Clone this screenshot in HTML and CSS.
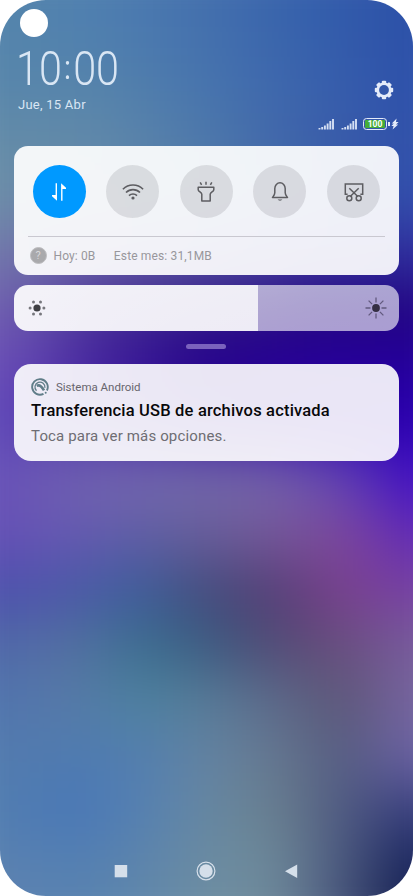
FILE: index.html
```
<!DOCTYPE html>
<html lang="es">
<head>
<meta charset="utf-8">
<title>Panel de notificaciones</title>
<link rel="stylesheet" href="styles.css">
</head>
<body>
<main class="phone">
  <div class="wallpaper"></div>
  <div class="camera"></div>
  <header class="header">
    <div class="clock-block">
      <div class="clock">10<span class="colon">:</span>00</div>
      <div class="date">Jue, 15 Abr</div>
    </div>
    <div class="status">
      <svg class="gear" width="20" height="20" viewBox="0 0 20 20"><g fill="#e4ebf9"><circle cx="10" cy="10" r="7.600"/><rect x="7.800" y="0.8" width="4.400" height="18.400" rx="1"/><rect x="7.800" y="0.8" width="4.400" height="18.400" rx="1" transform="rotate(45 10 10)"/><rect x="7.800" y="0.8" width="4.400" height="18.400" rx="1" transform="rotate(90 10 10)"/><rect x="7.800" y="0.8" width="4.400" height="18.400" rx="1" transform="rotate(135 10 10)"/></g><circle cx="10" cy="10" r="4.900" fill="#3458aa"/></svg>
      <div class="indicators">
        <svg class="signal" width="17" height="12" viewBox="0 0 17 12"><path d="M1.500 10v1.500M4.200 9v2.500M6.900 7.500v4M9.600 5.500v6M12.300 3v8.500M15 1v10.500" stroke="#d5e0f4" stroke-width="1.900"/></svg>
        <svg class="signal" width="17" height="12" viewBox="0 0 17 12"><path d="M1.500 10v1.500M4.200 9v2.500M6.900 7.500v4M9.600 5.500v6M12.300 3v8.500M15 1v10.500" stroke="#d5e0f4" stroke-width="1.900"/></svg>
        <div class="battery"><span class="level">100</span></div>
        <svg class="bolt" width="8" height="12" viewBox="0 0 8 12"><path d="M5.600.6.8 5.500h2L.4 8h2.200L1.600 11.500l5.600-5H5l2.600-2.500H5z" fill="#e4ebf9"/></svg>
      </div>
    </div>
  </header>

  <section class="card controls">
    <div class="toggles">
      <div class="toggle on"><svg width="28" height="28" viewBox="0 0 28 28" fill="#fff"><path d="M10.600 5.300H12v17.400L7 18.300v-1.200h3.600zM16.100 22.700h1.400V10.900H21V9.700l-4.900-4.400z"/></svg></div>
      <div class="toggle"><svg width="28" height="28" viewBox="0 0 28 28" fill="none" stroke="#5d5d61" stroke-width="1.600"><path d="M3.900 11.200a14.300 14.300 0 0 1 20.200 0M7 14.500a9.900 9.900 0 0 1 14 0M10 17.600a5.700 5.700 0 0 1 8 0"/><circle cx="14" cy="20" r="1.600" fill="#5d5d61" stroke="none"/></svg></div>
      <div class="toggle"><svg width="28" height="28" viewBox="0 0 28 28" fill="none" stroke="#5d5d61" stroke-width="1.500" stroke-linejoin="round"><path d="M6.200 9.300h15.600v2.400c0 2-3.600 2.500-3.600 4.600v6.600H9.800v-6.600c0-2.100-3.600-2.600-3.600-4.600zM14 3.800v3M8.200 4.300l1.400 2.500M19.800 4.300l-1.400 2.500"/></svg></div>
      <div class="toggle"><svg width="28" height="28" viewBox="0 0 28 28" fill="none" stroke="#5d5d61" stroke-width="1.500" stroke-linejoin="round"><path d="M8.800 10.500a5.200 5.800 0 0 1 10.400 0v4.200c0 2 1.200 3.200 2.300 4.800h-15c1.100-1.600 2.300-2.800 2.300-4.800z"/><path d="M11.700 21.500h4.600c-.8 1.500-3.800 1.500-4.600 0z" fill="#5d5d61" stroke="none"/></svg></div>
      <div class="toggle"><svg width="28" height="28" viewBox="0 0 28 28" fill="none" stroke="#5d5d61" stroke-width="1.500"><path d="M7.600 16.200H5.300V6h17.400v10.200h-2.300M9.300 10.200l8.500 8.300M18.700 10.200l-8.500 8.300"/><circle cx="9.300" cy="20.200" r="2.500"/><circle cx="18.700" cy="20.200" r="2.500"/></svg></div>
    </div>
    <div class="usage">
      <span class="help">?</span>
      <span class="today">Hoy: 0B</span>
      <span class="month">Este mes: 31,1MB</span>
    </div>
  </section>

  <section class="brightness">
    <svg width="18" height="18" viewBox="0 0 18 18"><circle cx="9" cy="9" r="3.600" fill="#3f3f43"/><g fill="#77777d"><circle cx="2.100" cy="9" r="1.500"/><circle cx="15.900" cy="9" r="1.500"/><circle cx="5.500" cy="3" r="1.500"/><circle cx="12.500" cy="3" r="1.500"/><circle cx="5.500" cy="15" r="1.500"/><circle cx="12.500" cy="15" r="1.500"/></g></svg>
    <svg width="22" height="22" viewBox="0 0 22 22"><circle cx="11" cy="11" r="3.900" fill="#352f43"/><path d="M11 .5v5M11 16.500v5M.5 11h5M16.500 11h5M3.600 3.600l3.500 3.500M14.900 14.900l3.500 3.500M3.600 18.400l3.500-3.500M14.900 7.100l3.500-3.500" stroke="#625a7e" stroke-width="1.300"/></svg>
  </section>
  <div class="handle"></div>

  <article class="card notification">
    <div class="source">
      <svg width="18" height="18" viewBox="0 0 18 18" fill="none" stroke="#607d88"><path d="M15.900 12.500A7.800 7.800 0 1 0 12.500 15.900" stroke-width="1.900"/><path d="M5.500 12.700A5 5 0 1 1 13.900 9.800" stroke-width="1.300"/><path d="M5.800 7.800c2.800-1.400 4.800.4 7.200 4.600" stroke-width="2.600"/><circle cx="14.700" cy="14.700" r="1" fill="#607d88" stroke="none"/></svg>
      <span class="app">Sistema Android</span>
    </div>
    <h1 class="title">Transferencia USB de archivos activada</h1>
    <p class="text">Toca para ver más opciones.</p>
  </article>

  <nav class="nav">
    <svg width="20" height="20" viewBox="0 0 20 20"><rect x="3.700" y="4" width="12.500" height="12.300" fill="#d5dfea"/></svg>
    <svg width="20" height="20" viewBox="0 0 20 20"><circle cx="10" cy="10" r="8.900" fill="none" stroke="#d5dfea" stroke-width="1.200"/><circle cx="10" cy="10" r="6.700" fill="#d5dfea"/></svg>
    <svg width="20" height="20" viewBox="0 0 20 20"><path d="M16.200 3.500v13.500L4 10.200z" fill="#d5dfea"/></svg>
  </nav>
</main>
</body>
</html>
```
FILE: styles.css
```
* { box-sizing: border-box; }
body { margin: 0; background: #fff; font-family: Roboto, "Liberation Sans", sans-serif; }
.phone {
  position: relative;
  isolation: isolate;
  width: 413px;
  height: 896px;
  border-radius: 46px;
  overflow: hidden;
  display: flex;
  flex-direction: column;
  padding: 0 14px 0 13.500px;
}
/* Horizontal colour bands, softened into one continuous field. */
.wallpaper {
  position: absolute;
  z-index: -1;
  inset: -56px;
  filter: blur(27px);
  background-color: #506090;
  background-repeat: no-repeat;
  background-size: 100% 57px;
  background-image:
    linear-gradient(90deg, #5585ab 56px, #4f7fb0 156px, #4470ad 262px, #3560ac 366px, #2c50a8 469px),
    linear-gradient(90deg, #5585ab 56px, #4f7fb0 156px, #4470ad 262px, #3560ac 366px, #2c50a8 469px),
    linear-gradient(90deg, #5886ab 56px, #5583ab 156px, #4774ae 262px, #3a62ac 366px, #2d50aa 469px),
    linear-gradient(90deg, #648ca8 56px, #6089aa 156px, #4d78aa 262px, #3c60aa 366px, #3050aa 469px),
    linear-gradient(90deg, #6c8ea8 56px, #6685a8 156px, #547caa 262px, #4064aa 366px, #304cac 469px),
    linear-gradient(90deg, #7278aa 56px, #6a60a6 156px, #5550a0 262px, #4038a0 366px, #2c2c9c 469px),
    linear-gradient(90deg, #7060b0 56px, #4a3498 156px, #341c88 262px, #260880 366px, #220482 469px),
    linear-gradient(90deg, #6c50b8 56px, #42209c 156px, #220088 262px, #260098 366px, #24009c 469px),
    linear-gradient(90deg, #6048b8 56px, #4830a8 156px, #34109c 262px, #3000a8 366px, #2a00b0 469px),
    linear-gradient(90deg, #6852b8 56px, #7060b0 125px, #7468ae 194px, #7268aa 262px, #7462aa 331px, #6044b4 400px, #400cc4 469px),
    linear-gradient(90deg, #6650b6 56px, #6659b2 125px, #605ea6 194px, #685e9a 262px, #76589a 331px, #7e489c 400px, #6028b8 469px),
    linear-gradient(90deg, #4e50ae 56px, #4c58a8 125px, #3e5e9c 194px, #444c7c 262px, #563e76 331px, #7c408e 400px, #7640a4 469px),
    linear-gradient(90deg, #5068a8 56px, #5470a2 125px, #3c7090 194px, #3a5c82 262px, #524a74 331px, #6a4e7e 400px, #785c9e 469px),
    linear-gradient(90deg, #5074ae 56px, #587aa8 125px, #4c82a0 194px, #587c98 262px, #5c6a8a 331px, #5c5676 400px, #7866a2 469px),
    linear-gradient(90deg, #547cae 56px, #4e7ab0 125px, #527eb0 194px, #6484a2 262px, #667890 331px, #545c80 400px, #6c62a6 469px),
    linear-gradient(90deg, #527eb0 56px, #4876b8 125px, #5480b2 194px, #6688a2 262px, #6a808e 331px, #4e5880 400px, #343c7c 469px),
    linear-gradient(90deg, #5c82b0 56px, #5480b2 125px, #5c84ac 194px, #6c8ca2 262px, #6e8a9a 331px, #4a567c 400px, #142058 469px),
    linear-gradient(90deg, #6084b0 56px, #5a82b0 125px, #6088ac 194px, #7090a2 262px, #708a9a 331px, #46527a 400px, #101a48 469px);
  background-position: 0 0, 0 56px, 0 112px, 0 168px, 0 224px, 0 280px, 0 336px, 0 392px, 0 448px, 0 504px, 0 560px, 0 616px, 0 672px, 0 728px, 0 784px, 0 840px, 0 896px, 0 952px;
}
.camera {
  position: absolute;
  left: 20px;
  top: 9px;
  width: 28px;
  height: 28px;
  border-radius: 50%;
  background: #fff;
}
.header { height: 146px; display: flex; justify-content: space-between; flex: none; }
.clock-block { padding: 41px 0 0 4.500px; color: #d9e6f4; }
.clock { width: 104px; margin-left: -2px; font-size: 47.500px; font-weight: 300; line-height: 56px; white-space: nowrap; transform: scaleX(.87); transform-origin: 0 0; }
.colon { display: inline-block; width: 13px; text-align: center; font-size: 33px; font-weight: 400; line-height: 1; transform: translateY(-6px); }
.date { font-size: 13px; line-height: 16px; letter-spacing: .25px; }
.status { padding-top: 80px; display: flex; flex-direction: column; align-items: flex-end; }
.gear { margin-right: 5px; }
.indicators { display: flex; align-items: center; margin-top: 18px; height: 12px; }
.signal { margin-right: 6px; }
.signal + .signal { margin-right: 5px; }
.battery {
  position: relative;
  width: 24px;
  height: 12px;
  border: 1.500px solid #e4ebf9;
  border-radius: 3.500px;
  padding: 1px;
}
.battery::after { content: ""; position: absolute; right: -3.500px; top: 3px; width: 2px; height: 4px; background: #e4ebf9; }
.level { display: block; height: 8px; border-radius: 1px; background: #45ac38; color: #fff; font-size: 8.500px; font-weight: 700; line-height: 8.500px; text-align: center; }
.bolt { margin-left: 4px; }
.card { background: rgba(255, 255, 255, .92); flex: none; }
.controls { height: 129px; border-radius: 14px; padding: 19px 14px 0; }
.toggles { display: flex; justify-content: space-between; padding: 0 5px; }
.toggle { width: 53px; height: 53px; border-radius: 50%; background: rgba(70, 70, 75, .14); display: grid; place-items: center; }
.toggle.on { background: #0099ff; }
.usage { margin-top: 18px; border-top: 1px solid #c9c8d0; height: 38px; display: flex; align-items: center; font-size: 12px; color: #98979c; }
.help { width: 17px; height: 17px; margin-left: 2px; border-radius: 50%; background: #a9a9ac; border: 1px solid #bebec1; color: #d8d8da; font-size: 11px; line-height: 15px; text-align: center; }
.today { margin-left: 7px; letter-spacing: .1px; }
.month { margin-left: 18.500px; letter-spacing: .15px; }
.brightness {
  flex: none;
  margin-top: 10px;
  height: 46px;
  border-radius: 14px;
  padding: 0 12px 0 14px;
  display: flex;
  align-items: center;
  justify-content: space-between;
  background: linear-gradient(90deg, rgba(255, 255, 255, .92) 244px, rgba(255, 255, 255, .61) 244px);
}
.handle { flex: none; align-self: center; margin-top: 13px; width: 40px; height: 5px; border-radius: 3px; background: #7a62bd; }
.notification { margin-top: 15px; height: 97px; border-radius: 17px; padding: 14px 17px 0 17.500px; background: rgba(255, 255, 255, .9); }
.source { display: flex; align-items: center; height: 18px; }
.app { margin-left: 7px; font-size: 11.500px; color: #67656d; }
.title { margin: 4px 0 0; font-size: 16.500px; line-height: 22px; letter-spacing: .18px; font-weight: 500; color: #08080a; white-space: nowrap; }
.text { margin: 4px 0 0; font-size: 15px; line-height: 20px; letter-spacing: .15px; color: #6e6d73; white-space: nowrap; }
.nav { margin-top: auto; padding: 0 98px 15px 97px; display: flex; justify-content: space-between; }
```
